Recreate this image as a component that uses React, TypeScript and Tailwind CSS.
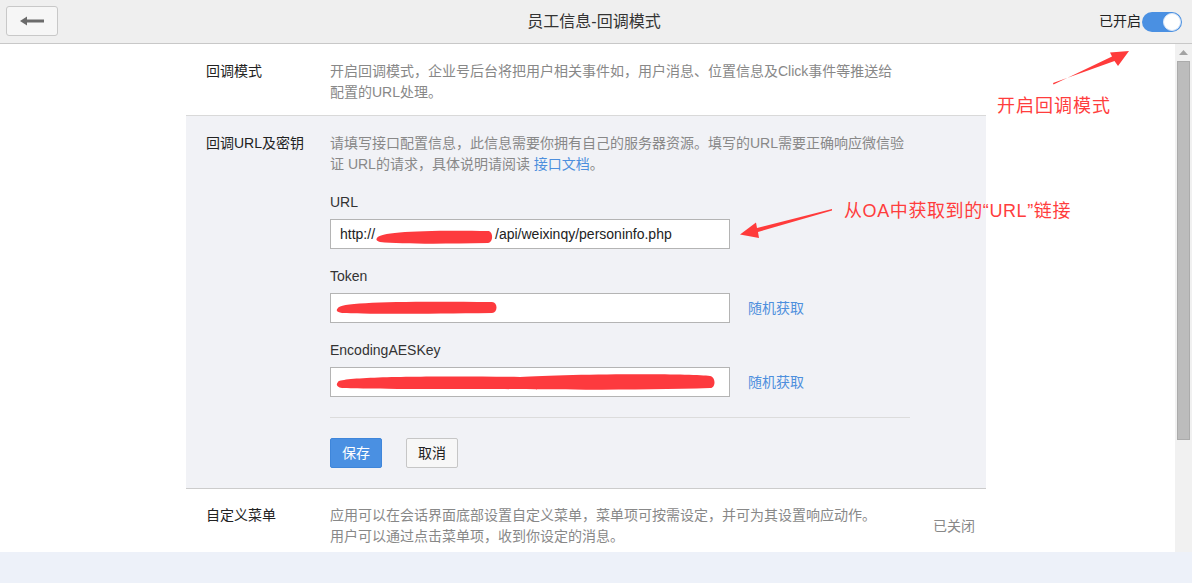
import React from "react";

function BackArrow() {
  return (
    <svg width="24" height="10" viewBox="0 0 24 10">
      <polygon points="0,5 7,0.5 7,9.5" fill="#6b6b6b" />
      <rect x="6" y="3.5" width="18" height="3" fill="#6b6b6b" />
    </svg>
  );
}

function Field({ label, children, link }: { label: string; children: React.ReactNode; link?: boolean }) {
  return (
    <div className="mt-[17px]">
      <div className="text-[14px] leading-[20px] text-[#333]">{label}</div>
      <div className="mt-[7px] flex items-center">
        <div className="w-[400px] h-[30px] border border-[#b4b4b4] bg-white px-[9px] flex items-center text-[14px] text-[#222] whitespace-nowrap overflow-hidden">
          {children}
        </div>
        {link && <span className="ml-[18px] text-[14px] text-[#4d8fdd]">随机获取</span>}
      </div>
    </div>
  );
}

export default function App() {
  return (
    <div className="relative w-[1192px] h-[583px] flex flex-col overflow-hidden font-['Liberation_Sans','Noto_Sans_CJK_SC',sans-serif]">
      {/* Header */}
      <div className="h-[44px] shrink-0 bg-[#efefef] border-b border-[#c8c8c8] grid grid-cols-[1fr_auto_1fr] items-center">
        <div className="self-start pt-[6px] pl-[6px]">
          <button className="w-[52px] h-[30px] border border-[#c8c8c8] rounded-[3px] bg-[#f6f6f6] flex items-center justify-center">
            <BackArrow />
          </button>
        </div>
        <div className="text-[16px] text-[#333] leading-[22px] mr-[4px]">员工信息-回调模式</div>
        <div className="flex justify-end items-center pr-[10px] gap-[1px]">
          <span className="text-[14px] text-[#222]">已开启</span>
          <div className="w-[40px] h-[20px] rounded-full bg-[#4a90e2] flex items-center justify-end pr-[1px]">
            <div className="w-[18px] h-[18px] rounded-full bg-white border border-[#d8e6f8]" />
          </div>
        </div>
      </div>

      {/* Body */}
      <div className="flex h-[508px] shrink-0">
        <div className="flex-1 bg-white overflow-hidden">
          <div className="ml-[186px] w-[800px]">
            {/* Section 1 */}
            <div className="flex pt-[17px] pb-[12px] border-b border-[#d9d9d9]">
              <div className="w-[144px] pl-[20px] text-[14px] leading-[21px] text-[#222]">回调模式</div>
              <div className="w-[580px] text-[14px] leading-[21px] text-[#888] whitespace-nowrap">
                开启回调模式，企业号后台将把用户相关事件如，用户消息、位置信息及Click事件等推送给
                <br />
                配置的URL处理。
              </div>
            </div>

            {/* Section 2 */}
            <div className="flex pt-[17px] pb-[20px] bg-[#f1f2f6] border-b border-[#cccccc]">
              <div className="w-[144px] pl-[20px] text-[14px] leading-[21px] text-[#222]">回调URL及密钥</div>
              <div className="w-[580px]">
                <div className="text-[14px] leading-[21px] text-[#888] whitespace-nowrap">
                  请填写接口配置信息，此信息需要你拥有自己的服务器资源。填写的URL需要正确响应微信验
                  <br />
                  证 URL的请求，具体说明请阅读 <span className="text-[#4d8fdd]">接口文档</span>。
                </div>
                <Field label="URL">
                  <span>http://</span>
                  <span className="inline-block w-[120px]" />
                  <span>/api/weixinqy/personinfo.php</span>
                </Field>
                <Field label="Token" link>
                  <span />
                </Field>
                <Field label="EncodingAESKey" link>
                  <span />
                </Field>
                <div className="mt-[20px] h-px w-[580px] bg-[#dcdcdc]" />
                <div className="mt-[20px] flex">
                  <button className="w-[52px] h-[30px] rounded-[2px] bg-[#4a90e2] border border-[#3f86da] text-white text-[14px]">保存</button>
                  <button className="ml-[24px] w-[52px] h-[30px] rounded-[2px] bg-[#f7f7f7] border border-[#c6c6c6] text-[#222] text-[14px]">取消</button>
                </div>
              </div>
            </div>

            {/* Section 3 */}
            <div className="flex pt-[16px]">
              <div className="w-[144px] pl-[20px] text-[14px] leading-[21px] text-[#222]">自定义菜单</div>
              <div className="w-[580px] text-[14px] leading-[21px] text-[#888] whitespace-nowrap">
                应用可以在会话界面底部设置自定义菜单，菜单项可按需设定，并可为其设置响应动作。
                <br />
                用户可以通过点击菜单项，收到你设定的消息。
              </div>
              <div className="flex-1 flex items-center justify-end pr-[11px] text-[14px] text-[#888]">已关闭</div>
            </div>
          </div>
        </div>

        {/* Scrollbar */}
        <div className="w-[17px] bg-[#f1f1f1] flex flex-col items-center">
          <div className="h-[17px] flex items-center justify-center">
            <svg width="9" height="5" viewBox="0 0 9 5">
              <polygon points="4.5,0 9,5 0,5" fill="#a3a3a3" />
            </svg>
          </div>
          <div className="w-[13px] h-[379px] bg-[#bcbcbc] border border-[#ababab]" />
        </div>
      </div>

      {/* Footer */}
      <div className="flex-1 bg-[#edf1f9]" />

      {/* Annotation overlay */}
      <svg className="absolute left-0 top-0 pointer-events-none" width="1192" height="583" viewBox="0 0 1192 583">
        {/* redactions */}
        <path d="M377,238 C380,232 420,230 488,231 C493,231 494,242 488,243 C440,244 400,244 380,242 C376,241 376,239 377,238 Z" fill="#fd3a3e" />
        <path d="M338,308 C340,302 400,301 492,302 C498,302 498,313 492,313 C420,314 360,314 342,313 C336,312 336,310 338,308 Z" fill="#fd3a3e" />
        <path d="M338,382 C340,376 450,376 520,377 C560,374 690,373 710,376 C716,377 716,388 710,388 C650,390 560,390 500,389 C420,389 360,389 342,388 C336,387 336,384 338,382 Z" fill="#fd3a3e" />
        {/* arrows */}
        <polygon points="1053,83 1053.5,84.5 1112,56.5 1110,52.5 1129,51 1118,66 1114.5,61" fill="#ff3b3b" />
        <polygon points="832,209 832,210.5 758,232 759,238 740,234.5 756,222.5 757,228" fill="#ff3b3b" />
      </svg>
      <div className="absolute left-[997px] top-[92px] text-[18px] leading-[24px] tracking-[1px] text-[#ff3d3d] font-['Noto_Sans_CJK_SC',sans-serif]">开启回调模式</div>
      <div className="absolute left-[844px] top-[199px] text-[18px] leading-[24px] tracking-[0.6px] text-[#ff3d3d]">从OA中获取到的“URL”链接</div>
    </div>
  );
}
